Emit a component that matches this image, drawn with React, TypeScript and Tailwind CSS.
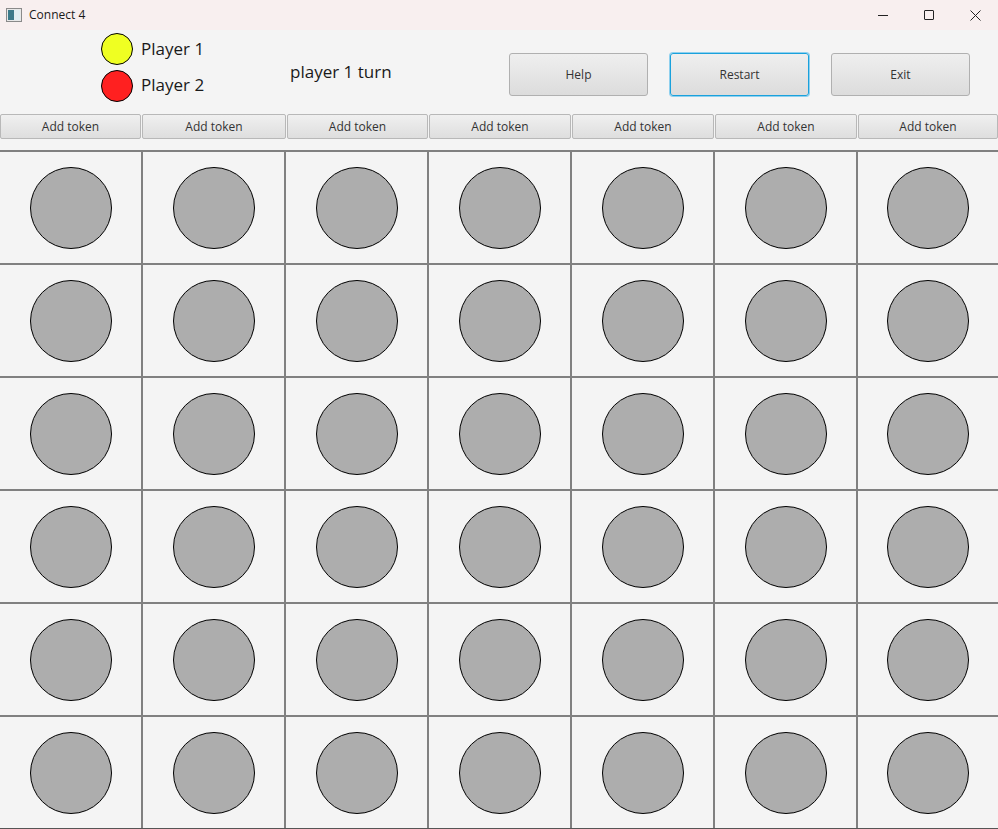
import React from "react";

const COLS = 7;
const ROWS = 6;

const font = { fontFamily: '"Open Sans", "Noto Sans", sans-serif' };

function TitleBar() {
  return (
    <div className="flex h-[30px] items-center bg-[#f8efef]">
      <svg width="16" height="14" viewBox="0 0 16 14" className="ml-[6px]">
        <rect x="0.5" y="0.5" width="15" height="13" fill="#e8e8e8" stroke="#8a8a8a" />
        <rect x="2" y="2" width="6" height="10" fill="#3b7a8a" />
        <rect x="8" y="2" width="6" height="10" fill="#dfeef2" />
      </svg>
      <span className="ml-[7px] text-[12px] text-[#1a1a1a]">Connect 4</span>
      <div className="ml-auto flex h-full items-center">
        <div className="flex h-full w-[46px] items-center justify-center">
          <div className="h-px w-[10px] bg-[#222]" />
        </div>
        <div className="flex h-full w-[46px] items-center justify-center">
          <div className="h-[10px] w-[10px] rounded-[1px] border border-[#222]" />
        </div>
        <div className="flex h-full w-[46px] items-center justify-center">
          <svg width="11" height="11" viewBox="0 0 11 11">
            <path d="M0.5 0.5 L10.5 10.5 M10.5 0.5 L0.5 10.5" stroke="#222" strokeWidth="1" />
          </svg>
        </div>
      </div>
    </div>
  );
}

function TopButton({ label, focused }: { label: string; focused?: boolean }) {
  return (
    <button
      className={
        "h-[43px] w-[139px] rounded-[3px] border bg-gradient-to-b from-[#efefef] to-[#dcdcdc] text-[12px] text-[#333] " +
        (focused ? "border-[#1aa1dc] shadow-[0_0_0_1px_#8fd0ee]" : "border-[#b0b0b0]")
      }
    >
      {label}
    </button>
  );
}

export default function App() {
  return (
    <div className="h-[829px] w-[998px] overflow-hidden bg-[#f4f4f4]" style={font}>
      <TitleBar />

      {/* header */}
      <div className="flex h-[84px]">
        <div className="ml-[101px] mt-[3px] flex w-[189px] flex-col gap-[5px]">
          <div className="flex items-center gap-[8px]">
            <div className="h-[32px] w-[32px] rounded-full border border-black bg-[#efff22]" />
            <span className="text-[17px] text-[#1a1a1a]">Player 1</span>
          </div>
          <div className="flex items-center gap-[8px]">
            <div className="h-[32px] w-[32px] rounded-full border border-black bg-[#ff2020]" />
            <span className="-mt-[3px] text-[17px] text-[#1a1a1a]">Player 2</span>
          </div>
        </div>
        <div className="mt-[29px] w-[219px] text-[17px] text-[#1a1a1a]">player 1 turn</div>
        <div className="mt-[23px] flex gap-[22px]">
          <TopButton label="Help" />
          <TopButton label="Restart" focused />
          <TopButton label="Exit" />
        </div>
      </div>

      {/* add token row */}
      <div className="grid h-[25px] grid-cols-[141px_144px_141px_142px_142px_142px_1fr] gap-[1px]">
        {Array.from({ length: COLS }).map((_, i) => (
          <button
            key={i}
            className="rounded-[2px] border border-[#b8b8b8] bg-gradient-to-b from-[#f0f0f0] to-[#dedede] text-[12px] text-[#333]"
          >
            Add token
          </button>
        ))}
      </div>

      {/* board */}
      <div className="mt-[11px] grid grid-cols-[141px_143px_143px_143px_143px_143px_1fr] border-b border-[#555]">
        {Array.from({ length: ROWS * COLS }).map((_, i) => {
          const col = i % COLS;
          return (
            <div
              key={i}
              className={
                "flex h-[113px] items-center justify-center border-t-2 border-[#808080] " +
                (col > 0 ? "border-l-2" : "")
              }
            >
              <div className="h-[82px] w-[82px] rounded-full border border-black bg-[#adadad]" />
            </div>
          );
        })}
      </div>
    </div>
  );
}
